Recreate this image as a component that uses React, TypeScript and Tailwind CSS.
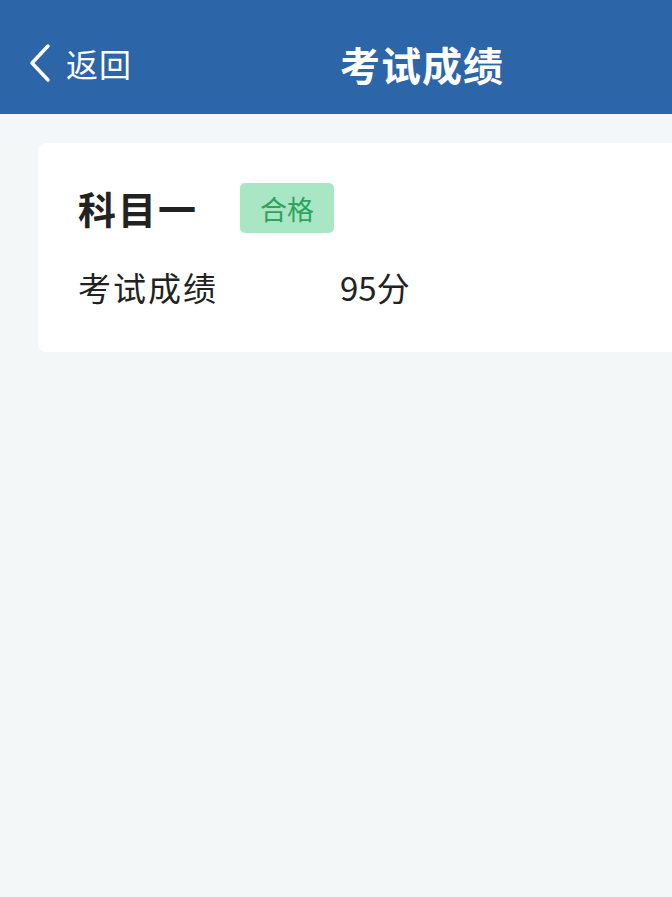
import React from "react";

const cjk = { fontFamily: '"Noto Sans CJK SC", "Noto Sans", sans-serif' };

export default function App() {
  return (
    <div className="min-h-[897px] w-[672px] bg-[#f3f7f8] overflow-hidden" style={cjk}>
      {/* top bar */}
      <header className="relative h-[114px] bg-[#2c65a8] flex items-center text-white">
        <button className="flex items-center pl-[27px] pt-[12px] gap-[14px]">
          <svg width="25" height="40" viewBox="0 0 25 40" fill="none">
            <path d="M21 3 L5 20 L21 37" stroke="white" strokeWidth="3.5" strokeLinecap="round" strokeLinejoin="round" />
          </svg>
          <span className="text-[32px] leading-none tracking-[1px]">返回</span>
        </button>
        <h1 className="absolute left-[340px] top-[40px] text-[40px] font-bold leading-[48px] tracking-[1px]">考试成绩</h1>
      </header>

      {/* result card */}
      <main className="pt-[29px] pl-[38px]">
        <section className="bg-white rounded-l-[8px] h-[209px] pl-[40px] pt-[40px]">
          <div className="flex items-center gap-[42px]">
            <span className="text-[38px] font-bold text-[#222] leading-none tracking-[2px]">科目一</span>
            <span className="h-[50px] px-[20px] rounded-[5px] bg-[#a9e6c4] text-[#2ea35e] text-[27px] flex items-center leading-none">合格</span>
          </div>
          <div className="flex items-center mt-[38px] text-[33px] text-[#222] leading-none">
            <span className="w-[262px] tracking-[2px]">考试成绩</span>
            <span>95分</span>
          </div>
        </section>
      </main>
    </div>
  );
}
